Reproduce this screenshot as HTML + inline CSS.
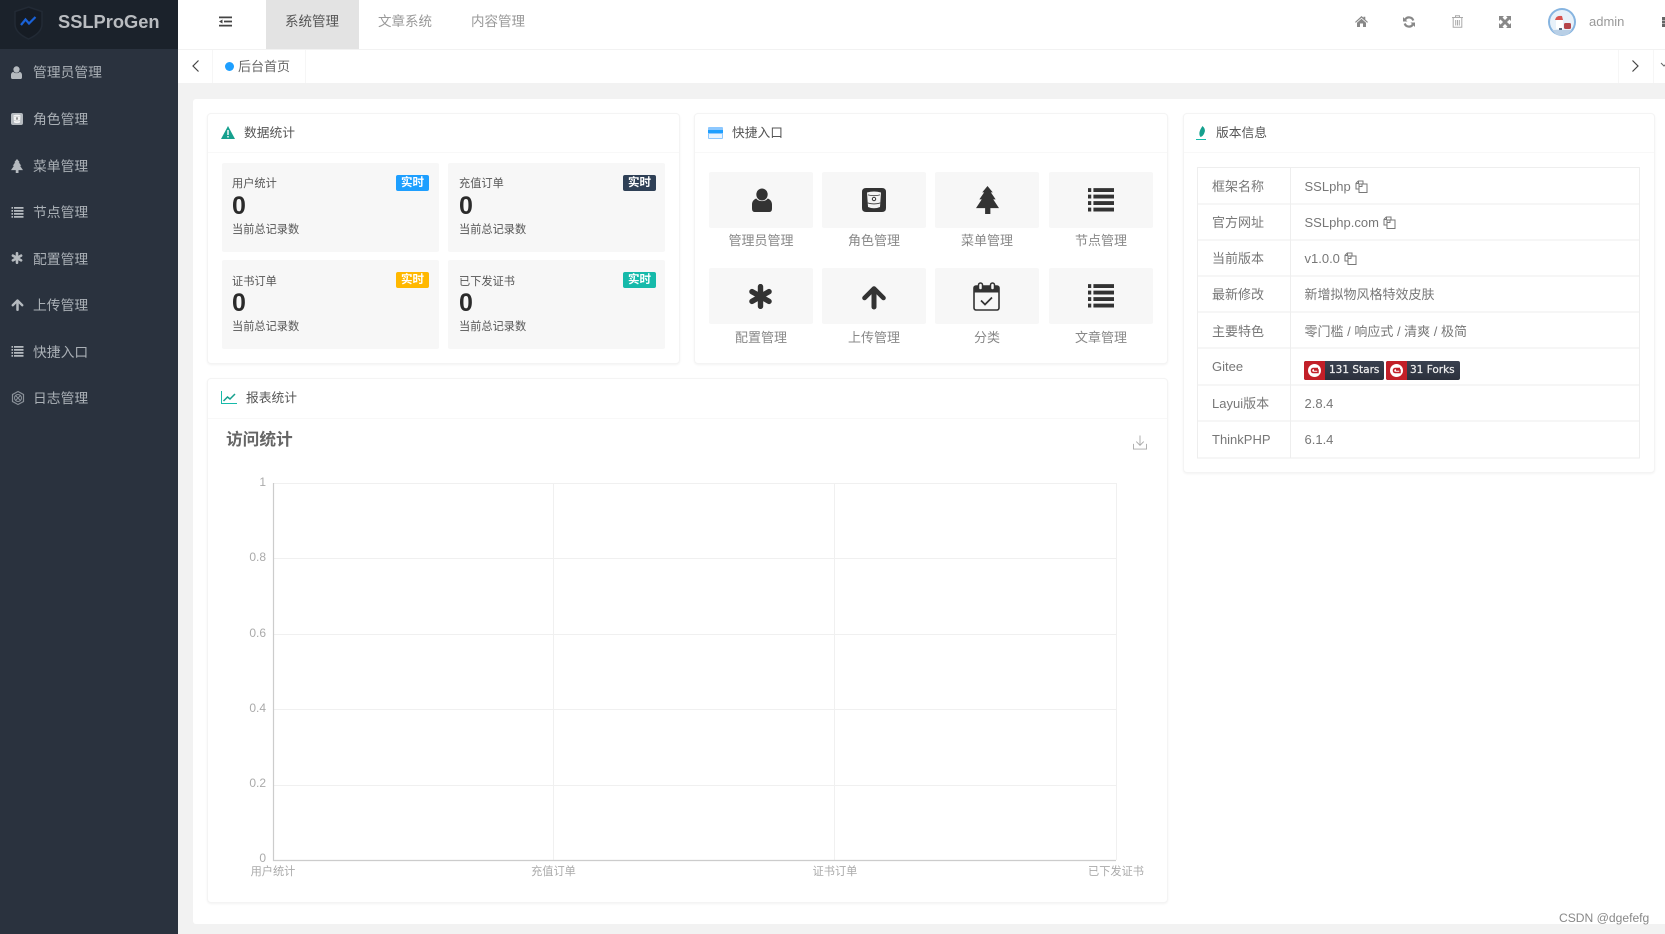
<!DOCTYPE html>
<html lang="zh-CN"><head><meta charset="utf-8"><title>SSLProGen</title>
<style>
*{box-sizing:border-box;margin:0;padding:0}
html,body{width:1665px;height:934px;overflow:hidden;background:#f2f2f2;font-family:"Liberation Sans","Noto Sans CJK SC",sans-serif;color:#666}
#w{position:absolute;left:0;top:0;width:1665px;height:934px;background:#f2f2f2;filter:blur(.35px)}
.a,.t{position:absolute}
.t{white-space:nowrap;line-height:20px;height:20px}
svg{position:absolute;overflow:visible}
.side{left:0;top:0;width:178px;height:934px;background:#2a323e}
.logo{left:0;top:0;width:178px;height:49px;background:#1b222b}
.si{left:33px;font-size:13.8px;color:#aab0b6}
.card{background:#fff;border:1px solid #f4f4f4;border-radius:4px;box-shadow:0 1px 2px rgba(0,0,0,.05)}
.hl{height:1px;background:#f8f8f8}
.ct{font-size:12.75px;color:#555}
.box{background:#f7f7f7;border-radius:2px;width:217px;height:89px}
.l{font-size:11.2px;color:#555}
.n{font-size:25px;font-weight:bold;color:#2b2b2b;line-height:28px;height:28px}
.b{width:33px;height:16px;border-radius:2px;color:#fff;font-size:11.5px;font-weight:bold;text-align:center;line-height:17px}
.tile{background:#f7f7f7;border-radius:2px;height:56px;width:104px}
.tl{font-size:13px;color:#888;text-align:center;width:104px}
.tk{font-size:13px;color:#777}
.tv{font-size:13px;color:#777}
.ax{font-size:12px;color:#aaa;text-align:right;width:30px;left:236px}
.xl{font-size:11.2px;color:#aaa;text-align:center;width:60px;top:862px}
.gb{background:linear-gradient(#3a4150,#2b303c);height:19px;top:361px;border-radius:2px;overflow:hidden}
.gb svg{left:0;top:0}
.gb span{position:absolute;top:0;color:#eee;font:10.5px/19px "DejaVu Sans",sans-serif;-webkit-text-stroke:.25px #eee;white-space:nowrap}
</style></head><body>
<svg width="0" height="0" style="position:absolute"><defs>
<symbol id="user" viewBox="0 0 24 24" preserveAspectRatio="none"><ellipse cx="12" cy="6.500" rx="6.800" ry="6"/><path d="M0 20.500v-4c0-4 3.500-5.500 5-6 3 3.500 11 3.500 14 0 1.500.5 5 2 5 6v4q0 3.500-3 3.500H3q-3 0-3-3.500z"/></symbol>
<symbol id="role" viewBox="0 0 24 24"><path d="M4 0h16q4 0 4 4v16q0 4-4 4H4q-4 0-4-4V4q0-4 4-4z"/><path fill="#f4f4f4" d="M5 4.500q7-2 14 0l-1 14.500q-6 2.500-12 0z"/><path d="M6 6.500q6 1.500 12 0v.8q-6 1.500-12 0z"/><path d="M5.700 14.500q6.300 2 12.600 0v.9q-6.300 2-12.600 0z"/><circle cx="12" cy="11" r="1.700" fill="none" stroke="#333" stroke-width="1"/></symbol>
<symbol id="tree" viewBox="0 0 24 24" preserveAspectRatio="none"><path d="M12 0l5.500 5.500h-2l5 6h-2.500l6 7.500h-9v5h-5.500v-5H0l6-7.500H3.500l5-6h-2z"/></symbol>
<symbol id="list" viewBox="0 0 24 24"><path d="M0 2h3v3.500H0zM5 2h19v3.500H5zM0 8h3v3.500H0zM5 8h19v3.500H5zM0 14h3v3.500H0zM5 14h19v3.500H5zM0 20h3v3.500H0zM5 20h19v3.500H5z"/></symbol>
<symbol id="star" viewBox="0 0 24 24"><path d="M12 2.500v19M3.800 7.300l16.400 9.400M20.200 7.300L3.800 16.700" stroke="currentColor" stroke-width="5.200" stroke-linecap="round" fill="none"/></symbol>
<symbol id="up" viewBox="0 0 24 24"><path d="M12 21.500V5" stroke="currentColor" stroke-width="5" stroke-linecap="round" fill="none"/><path d="M2.500 12.500L12 3l9.500 9.500" stroke="currentColor" stroke-width="4.600" stroke-linecap="round" stroke-linejoin="round" fill="none"/></symbol>
</defs></svg>
<div id="w">
<!-- top bars -->
<div class="a" style="left:178px;top:0;width:1487px;height:49px;background:#fff"></div>
<div class="a" style="left:178px;top:49px;width:1487px;height:1px;background:#f2f2f2"></div>
<div class="a" style="left:178px;top:50px;width:1487px;height:33px;background:#fff"></div>
<div class="a" style="left:266px;top:0;width:93px;height:49px;background:#e3e3e3"></div>
<svg style="left:219px;top:16px" width="13" height="11" viewBox="0 0 13 11"><path d="M0 .5h13v1.800H0zM5 4.600h8v1.800H5zM0 8.700h13v1.800H0z" fill="#444"/><path d="M3.500 3.500L0 5.500l3.500 2z" fill="#444"/></svg>
<div class="t" style="left:285px;top:12px;font-size:13.500px;color:#555">系统管理</div>
<div class="t" style="left:378px;top:12px;font-size:13.500px;color:#999">文章系统</div>
<div class="t" style="left:471px;top:12px;font-size:13.500px;color:#999">内容管理</div>

<svg style="left:1355px;top:16px" width="13" height="11" viewBox="0 0 13 11"><path d="M6.500 0l2 1.800V.8h1.800v2.700L13 6l-.8.800-5.700-5-5.700 5L0 6z" fill="#888"/><path d="M2 6.800l4.500-4 4.500 4V11H8V7.500H5V11H2z" fill="#888"/></svg>
<svg style="left:1403px;top:16px" width="12" height="12" viewBox="0 0 12 12"><path d="M10.300 4.500A4.500 4.500 0 0 0 2.200 3.500M1.700 7.500A4.500 4.500 0 0 0 9.800 8.500" stroke="#888" stroke-width="2.200" fill="none"/><path d="M0 1v4.500h4.500zM12 11V6.500H7.500z" fill="#888"/></svg>
<svg style="left:1452px;top:15px" width="11" height="13" viewBox="0 0 11 13"><path d="M0 2.500h11M3.500 2.500V.7h4v1.800M1.200 2.500V12.300h8.600V2.500M3.700 5v5.500M5.500 5v5.500M7.300 5v5.500" stroke="#aaa" stroke-width="1" fill="none"/></svg>
<svg style="left:1499px;top:16px" width="12" height="12" viewBox="0 0 12 12"><path d="M0 0h5L3.500 1.500 6 4l2.500-2.500L7 0h5v5l-1.500-1.500L8 6l2.500 2.500L12 7v5H7l1.500-1.500L6 8l-2.500 2.500L5 12H0V7l1.500 1.500L4 6 1.500 3.500 0 5z" fill="#888"/></svg>
<svg style="left:1548px;top:8px" width="28" height="28" viewBox="0 0 28 28"><circle cx="14" cy="14" r="14" fill="#86b4e0"/><circle cx="14" cy="14" r="12" fill="#e8f1f9"/><path d="M7 12q1-5 7-4l1 4z" fill="#d9534f"/><rect x="8" y="12" width="7" height="9" rx="1" fill="#fff"/><rect x="11" y="20" width="3" height="3" fill="#5a6a80"/><rect x="16" y="15" width="7" height="6" rx="1.500" fill="#b5454a"/><path d="M4 22h20l-4 4.500q-6 2-12 0z" fill="#b8cfe6"/></svg>
<div class="t" style="left:1589px;top:12px;font-size:13px;color:#999">admin</div>
<div class="a" style="left:1662px;top:17px;width:4px;height:2.500px;background:#666;box-shadow:0 3.500px 0 #666,0 7px 0 #666"></div>

<div class="a" style="left:212px;top:50px;width:1px;height:33px;background:#f6f6f6"></div>
<div class="a" style="left:305px;top:50px;width:1px;height:33px;background:#f6f6f6"></div>
<div class="a" style="left:1618px;top:50px;width:1px;height:33px;background:#f6f6f6"></div>
<div class="a" style="left:1653px;top:50px;width:1px;height:33px;background:#f6f6f6"></div>
<svg style="left:192px;top:60px" width="7" height="12" viewBox="0 0 7 12"><path d="M6.500.5L1 6l5.500 5.500" stroke="#444" stroke-width="1.200" fill="none"/></svg>
<svg style="left:1632px;top:60px" width="7" height="12" viewBox="0 0 7 12"><path d="M.5.5L6 6l-5.500 5.500" stroke="#444" stroke-width="1.200" fill="none"/></svg>
<svg style="left:1661px;top:63px" width="6" height="4" viewBox="0 0 6 4"><path d="M0 0l3 3 3-3" stroke="#666" fill="none"/></svg>
<div class="a" style="left:225px;top:62px;width:9px;height:9px;border-radius:50%;background:#1e9fff"></div>
<div class="t" style="left:238px;top:57px;font-size:13px;color:#666">后台首页</div>

<!-- main white panel -->
<div class="a" style="left:193px;top:99px;width:1472px;height:825px;background:#fff;border-radius:3px 0 0 3px"></div>

<!-- sidebar -->
<div class="a side"></div>
<div class="a logo"></div>
<svg style="left:14px;top:6px" width="29" height="34" viewBox="0 0 29 34"><path d="M14.500 1L28 5.500V18q0 9-13.500 15Q1 27 1 18V5.500z" fill="#161c24" stroke="#222a35" stroke-width="1.500"/><path d="M7 19l4.500-5.500 3.500 4 6.500-6.500" stroke="#1a62d8" stroke-width="2.200" fill="none"/></svg>
<div class="t" style="left:58px;top:12px;font-size:18.300px;font-weight:bold;color:#b9bcc0">SSLProGen</div>

<svg style="left:11px;top:66px;fill:#b5babf" width="11" height="13"><use href="#user"/></svg>
<div class="t si" style="top:63px">管理员管理</div>
<svg style="left:11px;top:113px;fill:#b5babf" width="12" height="12"><use href="#role"/></svg>
<div class="t si" style="top:110px">角色管理</div>
<svg style="left:11px;top:159px;fill:#b5babf" width="12" height="14"><use href="#tree"/></svg>
<div class="t si" style="top:157px">菜单管理</div>
<svg style="left:11px;top:206px;fill:#b5babf" width="13" height="12"><use href="#list"/></svg>
<div class="t si" style="top:203px">节点管理</div>
<svg style="left:11px;top:252px;color:#b5babf" width="12" height="12"><use href="#star"/></svg>
<div class="t si" style="top:250px">配置管理</div>
<svg style="left:11px;top:299px;color:#b5babf" width="13" height="12"><use href="#up"/></svg>
<div class="t si" style="top:296px">上传管理</div>
<svg style="left:11px;top:345px;fill:#b5babf" width="13" height="12"><use href="#list"/></svg>
<div class="t si" style="top:343px">快捷入口</div>
<svg style="left:11px;top:391px" width="14" height="14" viewBox="0 0 14 14"><path d="M7 .5l5.500 3v7L7 13.500l-5.500-3v-7z" stroke="#8a9199" stroke-width="1.200" fill="none"/><circle cx="7" cy="7" r="3.500" stroke="#8a9199" fill="none"/><path d="M4.500 4.500l5 5M9.500 4.500l-5 5" stroke="#8a9199"/></svg>
<div class="t si" style="top:389px">日志管理</div>

<!-- card 1 -->
<div class="a card" style="left:207px;top:113px;width:473px;height:251px"></div>
<div class="a hl" style="left:208px;top:152px;width:471px"></div>
<svg style="left:221px;top:126px" width="14" height="13" viewBox="0 0 14 13"><path d="M7 0l7 13H0z" fill="#16a08e"/><path d="M6.300 4h1.400v5H6.300zM6.300 10h1.400v1.500H6.300z" fill="#fff"/></svg>
<div class="t ct" style="left:244px;top:123px">数据统计</div>
<div class="a box" style="left:222px;top:163px"></div>
<div class="a box" style="left:448px;top:163px"></div>
<div class="a box" style="left:222px;top:260px"></div>
<div class="a box" style="left:448px;top:260px"></div>

<div class="t l" style="left:232px;top:174px">用户统计</div><div class="t n" style="left:232px;top:192px">0</div><div class="t l" style="left:232px;top:220px">当前总记录数</div><div class="a b" style="left:396px;top:175px;background:#1e9fff">实时</div>
<div class="t l" style="left:459px;top:174px">充值订单</div><div class="t n" style="left:459px;top:192px">0</div><div class="t l" style="left:459px;top:220px">当前总记录数</div><div class="a b" style="left:623px;top:175px;background:#2f4056">实时</div>
<div class="t l" style="left:232px;top:272px">证书订单</div><div class="t n" style="left:232px;top:289px">0</div><div class="t l" style="left:232px;top:317px">当前总记录数</div><div class="a b" style="left:396px;top:272px;background:#ffb800">实时</div>
<div class="t l" style="left:459px;top:272px">已下发证书</div><div class="t n" style="left:459px;top:289px">0</div><div class="t l" style="left:459px;top:317px">当前总记录数</div><div class="a b" style="left:623px;top:272px;background:#16baaa">实时</div>

<!-- card 2 -->
<div class="a card" style="left:694px;top:113px;width:474px;height:251px"></div>
<div class="a hl" style="left:695px;top:152px;width:472px"></div>
<svg style="left:708px;top:127px" width="15" height="12" viewBox="0 0 15 12"><rect width="15" height="12" rx="1" fill="#8cc8ff"/><rect y="3" width="15" height="3" fill="#1e9fff"/><rect x="1" y="7" width="13" height="4" fill="#e8f4ff"/></svg>
<div class="t ct" style="left:732px;top:123px">快捷入口</div>

<div class="a tile" style="left:709px;top:172px"></div><div class="a tile" style="left:822px;top:172px"></div><div class="a tile" style="left:935px;top:172px"></div><div class="a tile" style="left:1049px;top:172px"></div>
<div class="a tile" style="left:709px;top:268px"></div><div class="a tile" style="left:822px;top:268px"></div><div class="a tile" style="left:935px;top:268px"></div><div class="a tile" style="left:1049px;top:268px"></div>

<svg style="left:752px;top:188px;fill:#333" width="20" height="24"><use href="#user"/></svg>
<svg style="left:862px;top:188px;fill:#333" width="24" height="24"><use href="#role"/></svg>
<svg style="left:976px;top:186px;fill:#333" width="23" height="28"><use href="#tree"/></svg>
<svg style="left:1087px;top:186px;fill:#333" width="28" height="26"><use href="#list"/></svg>
<svg style="left:748px;top:284px;color:#333" width="25" height="25"><use href="#star"/></svg>
<svg style="left:862px;top:285px;color:#333" width="24" height="25"><use href="#up"/></svg>
<svg style="left:973px;top:282px" width="27" height="29" viewBox="0 0 27 29"><rect x="1" y="4" width="25" height="24" rx="2" fill="none" stroke="#333" stroke-width="1.600"/><rect x="1" y="4" width="25" height="6.500" fill="#333"/><rect x="5.500" y="1" width="4" height="7" rx="2" fill="#f7f7f7" stroke="#333" stroke-width="1.500"/><rect x="17.500" y="1" width="4" height="7" rx="2" fill="#f7f7f7" stroke="#333" stroke-width="1.500"/><path d="M8 18.500l4 4 7-7" fill="none" stroke="#333" stroke-width="1.700"/></svg>
<svg style="left:1087px;top:282px;fill:#333" width="28" height="26"><use href="#list"/></svg>

<div class="t tl" style="left:709px;top:231px">管理员管理</div><div class="t tl" style="left:822px;top:231px">角色管理</div><div class="t tl" style="left:935px;top:231px">菜单管理</div><div class="t tl" style="left:1049px;top:231px">节点管理</div>
<div class="t tl" style="left:709px;top:328px">配置管理</div><div class="t tl" style="left:822px;top:328px">上传管理</div><div class="t tl" style="left:935px;top:328px">分类</div><div class="t tl" style="left:1049px;top:328px">文章管理</div>

<!-- card 3 -->
<div class="a card" style="left:1183px;top:113px;width:472px;height:360px"></div>
<div class="a hl" style="left:1184px;top:152px;width:470px"></div>
<svg style="left:1196px;top:126px" width="11" height="14" viewBox="0 0 11 14"><path d="M6.500 0q3.500 3 2 6.500Q7.500 10 4.500 11 1.500 7 6.500 0z" fill="#16a08e"/><path d="M0 13h10v1H0z" fill="#16baaa"/></svg>
<div class="t ct" style="left:1216px;top:123px">版本信息</div>

<svg style="left:1197px;top:167px" width="444" height="292"><g fill="none" stroke="#eee"><rect x=".5" y=".5" width="442" height="290.500"/><path d="M93.500 0v291M0 37h443M0 73h443M0 109h443M0 145h443M0 181h443M0 218h443M0 254h443"/></g></svg>
<div class="t tk" style="left:1212px;top:177px">框架名称</div>
<div class="t tk" style="left:1212px;top:213px">官方网址</div>
<div class="t tk" style="left:1212px;top:249px">当前版本</div>
<div class="t tk" style="left:1212px;top:285px">最新修改</div>
<div class="t tk" style="left:1212px;top:322px">主要特色</div>
<div class="t tk" style="left:1212px;top:357px">Gitee</div>
<div class="t tk" style="left:1212px;top:394px">Layui版本</div>
<div class="t tk" style="left:1212px;top:430px">ThinkPHP</div>

<div class="t tv" style="left:1304.500px;top:177px">SSLphp</div>
<svg style="left:1355px;top:179.500px" width="13" height="13" viewBox="0 0 13 13"><path d="M4 9H1V3.300L3.300 1H8v2.500M1 3.500h2.500V1" fill="none" stroke="#777"/><path d="M4 4h8v8.500H4zM7 4v2.500H4" fill="none" stroke="#777"/></svg>
<div class="t tv" style="left:1304.500px;top:213px">SSLphp.com</div>
<svg style="left:1383px;top:216px" width="13" height="13" viewBox="0 0 13 13"><path d="M4 9H1V3.300L3.300 1H8v2.500M1 3.500h2.500V1" fill="none" stroke="#777"/><path d="M4 4h8v8.500H4zM7 4v2.500H4" fill="none" stroke="#777"/></svg>
<div class="t tv" style="left:1304.500px;top:249px">v1.0.0</div>
<svg style="left:1344px;top:252px" width="13" height="13" viewBox="0 0 13 13"><path d="M4 9H1V3.300L3.300 1H8v2.500M1 3.500h2.500V1" fill="none" stroke="#777"/><path d="M4 4h8v8.500H4zM7 4v2.500H4" fill="none" stroke="#777"/></svg>
<div class="t tv" style="left:1304.500px;top:285px">新增拟物风格特效皮肤</div>
<div class="t tv" style="left:1304.500px;top:322px">零门槛 / 响应式 / 清爽 / 极简</div>
<div class="a gb" style="left:1304px;width:80px"><svg width="21" height="19" viewBox="0 0 21 19"><rect width="21" height="19" fill="#c21f28"/><circle cx="10.500" cy="9.500" r="6.500" fill="#fff"/><path d="M14 7.500H9.500q-2 0-2 2t2 2H14V9H10" fill="none" stroke="#c21f28" stroke-width="1.500"/></svg><span style="left:25px">131 Stars</span></div>
<div class="a gb" style="left:1386px;width:74px"><svg width="21" height="19" viewBox="0 0 21 19"><rect width="21" height="19" fill="#c21f28"/><circle cx="10.500" cy="9.500" r="6.500" fill="#fff"/><path d="M14 7.500H9.500q-2 0-2 2t2 2H14V9H10" fill="none" stroke="#c21f28" stroke-width="1.500"/></svg><span style="left:24px">31 Forks</span></div>
<div class="t tv" style="left:1304.500px;top:394px">2.8.4</div>
<div class="t tv" style="left:1304.500px;top:430px">6.1.4</div>

<!-- chart card -->
<div class="a card" style="left:207px;top:378px;width:961px;height:525px"></div>
<div class="a hl" style="left:208px;top:418px;width:959px"></div>
<svg style="left:221px;top:391px" width="16" height="13" viewBox="0 0 16 13"><path d="M.5 0v12.500H16" stroke="#16baaa" fill="none"/><path d="M2.500 10l4-4 2.500 2 5-5" stroke="#16a08e" stroke-width="1.500" fill="none"/></svg>
<div class="t ct" style="left:246px;top:388px">报表统计</div>
<div class="t" style="left:226px;top:430px;font-size:16.700px;font-weight:bold;color:#666">访问统计</div>
<svg style="left:1133px;top:435px" width="14" height="15" viewBox="0 0 15 15"><path d="M7.500 0v10M3.500 6.500l4 4 4-4M.5 9v5.500h14V9" fill="none" stroke="#aaa"/></svg>

<svg style="left:270px;top:480px" width="850" height="384"><g fill="none" stroke="#f0f0f0"><path d="M3 3.500h843M3 78.500h843M3 154.500h843M3 229.500h843M3 305.500h843M283.500 3v377M564.500 3v377M846.500 3v377"/></g><path d="M3.500 3v377.500H846" fill="none" stroke="#ccc" stroke-width="1.200"/></svg>
<div class="t ax" style="top:472px">1</div>
<div class="t ax" style="top:547px">0.8</div>
<div class="t ax" style="top:623px">0.6</div>
<div class="t ax" style="top:698px">0.4</div>
<div class="t ax" style="top:773px">0.2</div>
<div class="t ax" style="top:848px">0</div>
<div class="t xl" style="left:243px">用户统计</div>
<div class="t xl" style="left:523.500px">充值订单</div>
<div class="t xl" style="left:805px">证书订单</div>
<div class="t xl" style="left:1086px">已下发证书</div>

<div class="t" style="left:1559px;top:908px;font-size:12.100px;color:#888">CSDN @dgefefg</div>
</div>
</body></html>
